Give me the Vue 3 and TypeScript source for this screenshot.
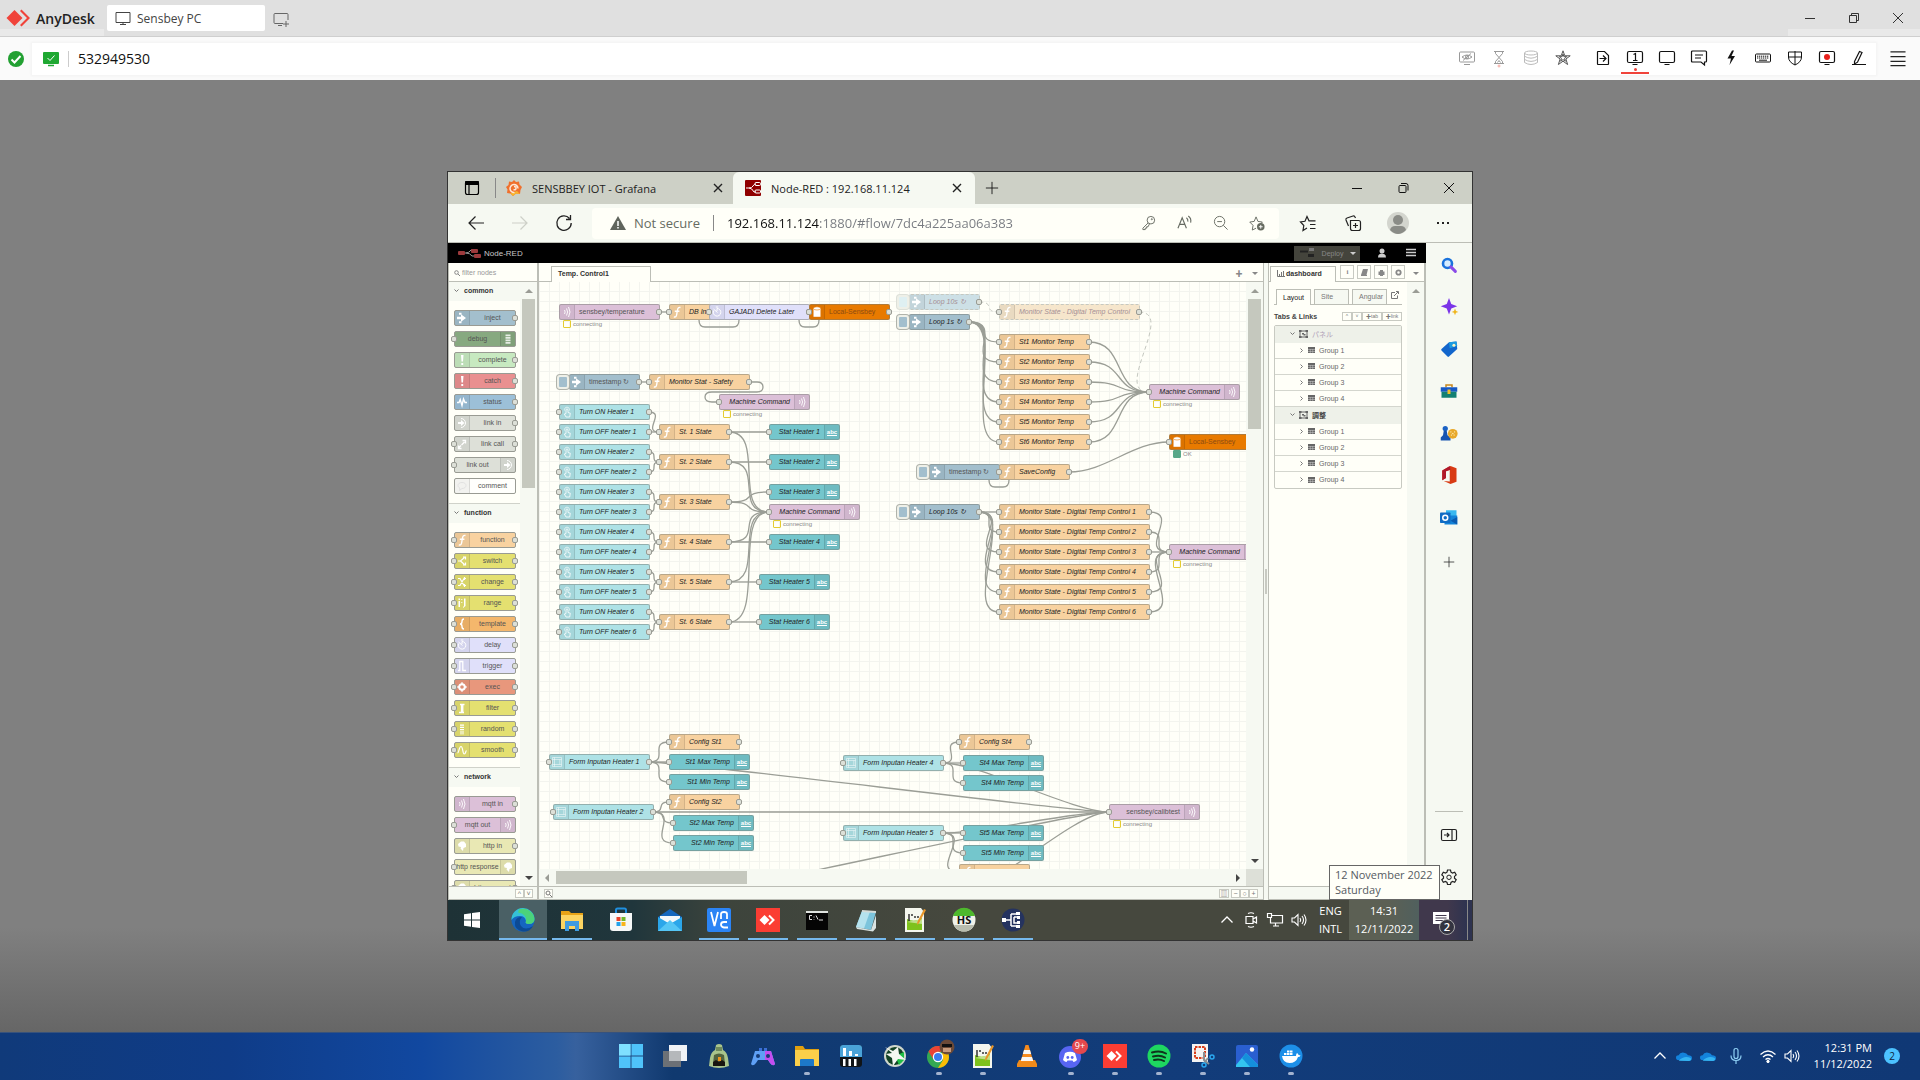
<script setup lang="ts">
type NodeKind = 'mqtt' | 'fn' | 'delay' | 'db' | 'inject' | 'button' | 'text' | 'form'

interface FlowNode {
  kind: NodeKind
  x: number
  y: number
  w: number
  label: string
  plain?: boolean
  right?: boolean
  off?: boolean
  status?: 'connecting' | 'OK'
  noIn?: boolean
  noOut?: boolean
}

interface PaletteNode {
  label: string
  color: string
  icon: string
  right?: boolean
  in?: boolean
  out?: boolean
}

const glyph: Record<string, string> = {
  inject: '<path d="M0 4.700h4V2.300L9 6 4 9.700V7.300H0zM2 .8h2.500v2H2zM2 9.200h2.500v2H2z"/>',
  fn: '<path d="M8.500 1.500C6 .8 5.700 3 5.300 5L4.600 9c-.3 1.700-1 2.300-2.800 1.800M2.800 5.300h4.600" fill="none" stroke="#fff" stroke-width="1.400"/>',
  alert: '<path d="M4 1h2.500l-.5 6.500H4.500zM4.300 9h1.900v2H4.300z"/>',
  status: '<path d="M0 6.500h2l1.200-3 1.800 6L6.500 3 8 6.500h2" fill="none" stroke="#fff" stroke-width="1.400"/>',
  link: '<path d="M1 5h3V3l3.500 3L4 9V7H1z"/><path d="M4 1.500a4.500 4.500 0 0 1 0 9" fill="none" stroke="#fff"/>',
  linkcall: '<path d="M2 9.500l2-2M4.500 7l3-3M5.500 2.500h3v3M1.500 7.500v3h3" fill="none" stroke="#fff" stroke-width="1.300"/>',
  bubble: '<path d="M5 2.500c2.500 0 4 1.300 4 3s-1.500 3-4 3l-2.500 2 .3-2.500C1.500 7.500 1 6.500 1 5.500c0-1.700 1.500-3 4-3z" fill="none" stroke="#ddd" stroke-width=".8"/>',
  debug: '<path d="M2.500 1.500h5v1.800h-5zM2.500 4h5v1.800h-5zM2.500 6.500h5v1.800h-5zM2.500 9h5v1.800h-5z" opacity=".8"/>',
  switch: '<path d="M1 6h2.500l4-3.500M3.500 6l4 3.500M6 2h2.500v2.500M8.500 7.500V10H6" fill="none" stroke="#fff" stroke-width="1.200"/>',
  change: '<path d="M1 2.500h2l4 7h2M1 9.500h2l4-7h2M7.500 1v3M7.500 8v3" fill="none" stroke="#fff" stroke-width="1.200"/>',
  range: '<path d="M1.500 4h1.500v6H1.500zM1.500 1.500H3v1.500H1.500zM7 1.500h1.500V9L6 11V9.500h1zM4.300 2h1v1h-1zM4.300 5h1v1h-1z"/>',
  brace: '<path d="M7 1C5 1 5 2 5 3.500S4.500 6 3 6c1.500 0 2 1 2 2.500S5 11 7 11" fill="none" stroke="#fff" stroke-width="1.400"/>',
  clock: '<path d="M5 2.500a3.800 3.800 0 1 1-3.300 2M5 2.500V5M1.500 3l4 3.500M3.800 1h2.500" fill="none" stroke="#fff" stroke-width="1"/>',
  trigger: '<path d="M1 10.500h1.800V1.500h3v9H9" fill="none" stroke="#fff" stroke-width="1.300"/>',
  gear: '<circle cx="5" cy="6" r="2.800" fill="none" stroke="#fff" stroke-width="2"/><path d="M4.300 1.200h1.400v2H4.300zM4.300 8.800h1.400v2H4.300zM.3 5.300h2v1.400h-2zM7.700 5.300h2v1.400h-2z"/>',
  filter: '<path d="M3 2.500h1.500v8H2M7.500 2.500H5.800v8H7" fill="none" stroke="#fff" stroke-width="1.300"/>',
  list: '<path d="M3 1.500h4v1.200H3zM3 3.800h4V5H3zM3 6.100h4v1.200H3zM3 8.400h4v1.200H3zM3 10.500h4v.8H3z"/>',
  smooth: '<path d="M.5 9C2 9 2 2.500 4 2.500S5.500 10 7.200 10 8.500 7 9.500 6.500" fill="none" stroke="#fff" stroke-width="1.200"/>',
  wave: '<path d="M2.500 4q1.300 2 0 4M4.500 2.500q2.200 3.500 0 7M6.500 1q3 5 0 10" fill="none" stroke="#fff" stroke-width=".9"/>',
  globe: '<path d="M1 4l3-2.500h3L9 4v3L6.500 8 6 11 3.500 8.500 4 7 1.500 6.500z"/>',
  db: '<path d="M1.500 2.500h7v8.300h-7z"/><ellipse cx="5" cy="2.400" rx="3.500" ry="1.600" stroke="#e87a00" stroke-width=".6"/>',
  button: '<path d="M4 7.500V4q0-1 1-1t1 1v2.500l2.300.7-.6 3.800H4L2.300 8z" fill="none" stroke="#fff" stroke-width=".8"/><path d="M2.500 4.500a2.600 2.600 0 1 1 5 0" fill="none" stroke="#fff" stroke-opacity=".8" stroke-width=".8"/>',
  form: '<path d="M.5 1.500h9v9h-9zM2.500 1.500v9M.5 3.500h9M.5 8.500h9M7.800 3.500v5" fill="none" stroke="#fff" stroke-opacity=".7" stroke-width=".7"/>',
}

const palette: { title: string; nodes: PaletteNode[] }[] = [
  {
    title: 'common',
    nodes: [
      { label: 'inject', color: '#a3bfcd', icon: 'inject', out: true },
      { label: 'debug', color: '#87a980', icon: 'debug', right: true, in: true },
      { label: 'complete', color: '#c7e9c0', icon: 'alert', out: true },
      { label: 'catch', color: '#e99090', icon: 'alert', out: true },
      { label: 'status', color: '#9cc0d8', icon: 'status', out: true },
      { label: 'link in', color: '#dde0d8', icon: 'link', out: true },
      { label: 'link call', color: '#dde0d8', icon: 'linkcall', in: true, out: true },
      { label: 'link out', color: '#dde0d8', icon: 'link', right: true, in: true },
      { label: 'comment', color: '#fffffc', icon: 'bubble' },
    ],
  },
  {
    title: 'function',
    nodes: [
      { label: 'function', color: '#f8d2a0', icon: 'fn', in: true, out: true },
      { label: 'switch', color: '#e4e070', icon: 'switch', in: true, out: true },
      { label: 'change', color: '#e4e070', icon: 'change', in: true, out: true },
      { label: 'range', color: '#e4e070', icon: 'range', in: true, out: true },
      { label: 'template', color: '#f4b76c', icon: 'brace', in: true, out: true },
      { label: 'delay', color: '#e0e0fa', icon: 'clock', in: true, out: true },
      { label: 'trigger', color: '#e0e0fa', icon: 'trigger', in: true, out: true },
      { label: 'exec', color: '#e8977c', icon: 'gear', in: true, out: true },
      { label: 'filter', color: '#e4e070', icon: 'filter', in: true, out: true },
      { label: 'random', color: '#e4e070', icon: 'list', in: true, out: true },
      { label: 'smooth', color: '#e4e070', icon: 'smooth', in: true, out: true },
    ],
  },
  {
    title: 'network',
    nodes: [
      { label: 'mqtt in', color: '#dcc0d8', icon: 'wave', out: true },
      { label: 'mqtt out', color: '#dcc0d8', icon: 'wave', right: true, in: true },
      { label: 'http in', color: '#e9e8b4', icon: 'globe', out: true },
      { label: 'http response', color: '#e9e8b4', icon: 'globe', right: true, in: true },
      { label: 'http request', color: '#e9e8b4', icon: 'globe', in: true, out: true },
    ],
  },
]

const kindIcon: Record<NodeKind, string> = {
  mqtt: 'wave', fn: 'fn', delay: 'clock', db: 'db', inject: 'inject', button: 'button', text: 'abc', form: 'form',
}

const nums = [1, 2, 3, 4, 5, 6]
const stateY = [150, 180, 220, 260, 300, 340]
const heaterY = [150, 180, 210, 260, 300, 340]

const nodes: FlowNode[] = [
  { kind: 'mqtt', x: 20, y: 30, w: 100, label: 'sensbey/temperature', plain: true, status: 'connecting', noIn: true },
  { kind: 'fn', x: 130, y: 30, w: 60, label: 'DB Insert' },
  { kind: 'delay', x: 170, y: 30, w: 100, label: 'GAJADI Delete Later' },
  { kind: 'db', x: 270, y: 30, w: 80, label: 'Local-Sensbey', plain: true },
  { kind: 'inject', x: 30, y: 100, w: 70, label: 'timestamp ↻', plain: true },
  { kind: 'fn', x: 110, y: 100, w: 100, label: 'Monitor Stat - Safety' },
  { kind: 'mqtt', x: 180, y: 120, w: 90, label: 'Machine Command', right: true, status: 'connecting', noOut: true },
  ...nums.flatMap((n): FlowNode[] => [
    { kind: 'button', x: 20, y: 90 + n * 40, w: 90, label: `Turn ON Heater ${n}` },
    { kind: 'button', x: 20, y: 110 + n * 40, w: 90, label: `Turn OFF heater ${n}` },
  ]),
  ...nums.map((n): FlowNode => ({ kind: 'fn', x: 120, y: stateY[n - 1], w: 70, label: `St. ${n} State` })),
  ...nums.map((n): FlowNode => ({
    kind: 'text', x: n < 5 ? 230 : 220, y: heaterY[n - 1], w: 70, label: `Stat Heater ${n}`, right: true, noOut: true,
  })),
  { kind: 'mqtt', x: 230, y: 230, w: 90, label: 'Machine Command', right: true, status: 'connecting', noOut: true },
  { kind: 'inject', x: 370, y: 20, w: 70, label: 'Loop 10s ↻', off: true },
  { kind: 'inject', x: 370, y: 40, w: 60, label: 'Loop 1s ↻' },
  { kind: 'fn', x: 460, y: 30, w: 140, label: 'Monitor State - Digital Temp Control', off: true },
  ...nums.map((n): FlowNode => ({ kind: 'fn', x: 460, y: 40 + n * 20, w: 90, label: `St${n} Monitor Temp` })),
  { kind: 'mqtt', x: 610, y: 110, w: 90, label: 'Machine Command', right: true, status: 'connecting', noOut: true },
  { kind: 'db', x: 630, y: 160, w: 80, label: 'Local-Sensbey', plain: true, status: 'OK' },
  { kind: 'inject', x: 390, y: 190, w: 70, label: 'timestamp ↻', plain: true },
  { kind: 'fn', x: 460, y: 190, w: 70, label: 'SaveConfig' },
  { kind: 'inject', x: 370, y: 230, w: 70, label: 'Loop 10s ↻' },
  ...nums.map((n): FlowNode => ({
    kind: 'fn', x: 460, y: 210 + n * 20, w: 150, label: `Monitor State - Digital Temp Control ${n}`,
  })),
  { kind: 'mqtt', x: 630, y: 270, w: 90, label: 'Machine Command', right: true, status: 'connecting', noOut: true },
  { kind: 'form', x: 10, y: 480, w: 100, label: 'Form Inputan Heater 1' },
  { kind: 'fn', x: 130, y: 460, w: 70, label: 'Config St1' },
  { kind: 'text', x: 130, y: 480, w: 80, label: 'St1 Max Temp', right: true, noOut: true },
  { kind: 'text', x: 130, y: 500, w: 80, label: 'St1 Min Temp', right: true, noOut: true },
  { kind: 'form', x: 14, y: 530, w: 100, label: 'Form Inputan Heater 2' },
  { kind: 'fn', x: 130, y: 520, w: 70, label: 'Config St2' },
  { kind: 'text', x: 134, y: 541, w: 80, label: 'St2 Max Temp', right: true, noOut: true },
  { kind: 'text', x: 134, y: 561, w: 80, label: 'St2 Min Temp', right: true, noOut: true },
  { kind: 'form', x: 304, y: 481, w: 100, label: 'Form Inputan Heater 4' },
  { kind: 'fn', x: 420, y: 460, w: 70, label: 'Config St4' },
  { kind: 'text', x: 424, y: 481, w: 80, label: 'St4 Max Temp', right: true, noOut: true },
  { kind: 'text', x: 424, y: 501, w: 80, label: 'St4 Min Temp', right: true, noOut: true },
  { kind: 'form', x: 304, y: 551, w: 100, label: 'Form Inputan Heater 5' },
  { kind: 'text', x: 424, y: 551, w: 80, label: 'St5 Max Temp', right: true, noOut: true },
  { kind: 'text', x: 424, y: 571, w: 80, label: 'St5 Min Temp', right: true, noOut: true },
  { kind: 'fn', x: 420, y: 590, w: 70, label: '' },
  { kind: 'mqtt', x: 570, y: 530, w: 90, label: 'sensbey/calibtest', plain: true, right: true, status: 'connecting', noOut: true },
]

// Cubic wire between two ports; short wires get a flatter curve.
function wire(x1: number, y1: number, x2: number, y2: number): string {
  const dist = Math.hypot(x2 - x1, y2 - y1)
  const reach = Math.round(Math.min(1, dist / 50) * 37)
  return `M${x1} ${y1}C${x1 + reach} ${y1} ${x2 - reach} ${y2} ${x2} ${y2}`
}

const wires: string[] = [
  wire(120, 30, 130, 30),
  'M160 38q0 7 6 7h28q6 0 6-7',
  'M260 38q0 7 6 7h8q6 0 6-7',
  wire(100, 100, 110, 100),
  'M210 100h8q6 0 6 5t-6 5h-45q-7 0-7 5t7 5h7',
  'M450 198q0 7 6 7h8q6 0 6-7',
  ...nums.flatMap((n) => [
    wire(110, 90 + n * 40, 120, stateY[n - 1]),
    wire(110, 110 + n * 40, 120, stateY[n - 1]),
    wire(190, stateY[n - 1], n < 5 ? 230 : 220, heaterY[n - 1]),
    wire(190, stateY[n - 1], 230, 230),
    wire(430, 40, 460, 40 + n * 20),
    wire(550, 40 + n * 20, 610, 110),
    wire(440, 230, 460, 210 + n * 20),
    wire(610, 210 + n * 20, 630, 270),
  ]),
  wire(530, 190, 630, 160),
  wire(110, 480, 130, 460), wire(110, 480, 130, 480), wire(110, 480, 130, 500), wire(110, 480, 570, 530),
  wire(114, 530, 130, 520), wire(114, 530, 134, 541), wire(114, 530, 134, 561), wire(114, 530, 570, 530),
  wire(404, 481, 420, 460), wire(404, 481, 424, 481), wire(404, 481, 424, 501), wire(404, 481, 570, 530),
  wire(404, 551, 424, 551), wire(404, 551, 424, 571), wire(404, 551, 420, 590), wire(404, 551, 570, 530),
  wire(114, 619, 570, 530), wire(404, 621, 570, 530),
]
const offWires: string[] = [wire(440, 20, 460, 30), wire(600, 30, 610, 110)]

const line: Record<string, string> = {
  monitor: '<path d="M1 2.500h14v10H1zM8 12.500v2M5 14.500h6"/>',
  newMonitor: '<path d="M10 12.500H2q-1 0-1-1v-8q0-1 1-1h12q1 0 1 1V9M5 14.500h4M13 10v6M10 13h6"/>',
  min: '<path d="M3 8.500h10"/>',
  restore: '<path d="M3.500 5.500h7v7h-7zM5.500 5.500v-2h7v7h-2"/>',
  restoreRound: '<path d="M5 5.500h5q1 0 1 1v5q0 1-1 1H5q-1 0-1-1v-5q0-1 1-1zM6 3.500h5q2 0 2 2v5"/>',
  close: '<path d="M3 3l10 10M13 3L3 13"/>',
  closeSmall: '<path d="M4 4l8 8M12 4l-8 8" stroke-width="1.400"/>',
  plus: '<path d="M8 1v14M1 8h14"/>',
  eyeoff: '<path d="M1.500 2h13q1 0 1 1v8q0 1-1 1h-13q-1 0-1-1V3q0-1 1-1zM5 14.500h6M3 7q5-4 10 0-5 4-10 0zM4 10.500L12 3.500"/><circle cx="8" cy="7" r="1.500"/>',
  hourglass: '<path d="M3 1.500h10M3 13.500h10M4.500 1.500v2L8 7.500l3.500-4v-2M4.500 13.500v-2L8 7.500l3.500 4v2M6.500 12.500l1.500-2 1.500 2"/><circle cx="8" cy="16" r="1" stroke="#f5a8a0"/>',
  dbs: '<g stroke="#bbb"><ellipse cx="8" cy="3" rx="6.500" ry="2"/><path d="M1.500 3v9.500q6.500 4 13 0V3M1.500 6.200q6.500 4 13 0M1.500 9.400q6.500 4 13 0"/></g>',
  star: '<path d="M8 .8l1.800 5h5.400L10.900 9l1.700 5.500L8 11.200l-4.600 3.300L5.100 9 .8 5.800h5.400zM8 4l.9 2.700h2.800L9.500 8.500l.8 2.700L8 9.600l-2.300 1.600.8-2.700-2.200-1.800h2.800z" stroke="#555"/>',
  file: '<path d="M3 1.500h6.500l4 4v8.500q0 .5-.5.5H3q-.5 0-.5-.5V2q0-.5.500-.5zM4.500 8.500h6M8 5.500l3 3-3 3" stroke-width="1.200"/>',
  display1: '<path d="M2 1.500h12q1.500 0 1.500 1.500v8q0 1.500-1.500 1.500H2Q.5 12.500.500 11V3Q.5 1.500 2 1.500zM5.500 14.500h5M6.500 4.500l2-1v7M6 10.500h4.500" stroke-width="1.200"/>',
  display: '<path d="M2 1.500h12q1.500 0 1.500 1.500v8q0 1.500-1.500 1.500H2Q.5 12.500.500 11V3Q.5 1.500 2 1.500zM5.500 14.500h5" stroke-width="1.200"/>',
  chat: '<path d="M1.500 1h13q1 0 1 1v9q0 1-1 1h-1v3l-3.500-3h-8.500q-1 0-1-1V2q0-1 1-1zM4 5h8M4 8h6" stroke-width="1.200"/>',
  bolt: '<path d="M9 .5L4.500 8.500H8L6.500 15 12 6H8.500L11 .5z" fill="#111" stroke="none"/>',
  keyboard: '<path d="M1.500 4h13q1 0 1 1v6q0 1-1 1h-13q-1 0-1-1V5q0-1 1-1z"/><path d="M2 6.200h12M2 8h12" stroke-dasharray="1.300 .7"/><path d="M4 10.200h8"/>',
  shield: '<path d="M1.500 2H8h6.500v5q0 5-6.500 8Q1.500 12 1.500 7zM8 1v14M1.500 7h13"/>',
  record: '<path d="M2 1.500h12q1.500 0 1.500 1.500v8q0 1.500-1.500 1.500H2Q.5 12.500.500 11V3Q.5 1.500 2 1.500zM5.500 14.500h5" stroke-width="1.200"/><circle cx="8" cy="7" r="3" fill="#e8201c" stroke="none"/>',
  pen: '<path d="M3.500 11.500l5-10 2.500 1-4.500 9.700-3 1.800zM1 14.500h14" stroke-width="1.200"/>',
  menu: '<path d="M0 1h16M0 6h16M0 11h16M0 15.500h16" stroke-width="1.300"/>',
  tabs: '<path d="M3.500 1.500h9q2 0 2 2v9q0 2-2 2h-9q-2 0-2-2v-9q0-2 2-2zM5 4v10.500" stroke-width="1.200"/><path d="M1.500 1.500h13v3h-13z" fill="currentColor"/>',
  back: '<path d="M16 8H1M7.500 1.500L1 8l6.500 6.500" stroke-width="1.200"/>',
  fwd: '<path d="M0 8h15M8.500 1.500L15 8l-6.500 6.500" stroke-width="1.200"/>',
  reload: '<path d="M13.500 3.500A7.200 7.200 0 1 0 15.200 8M14.500 0v4.500H10" stroke-width="1.300"/>',
  key: '<circle cx="10.500" cy="5.500" r="4"/><path d="M7.500 8.500L2 14v1.500h2.500V14H6v-1.500h1.500L9 9.500"/><circle cx="11.500" cy="4.500" r=".6"/>',
  read: '<path d="M1 14L5.500 3 10 14M2.800 10h5.500M10 3q2 1.500 1.500 4M12 1q3.500 2.500 2.500 7" stroke-width="1.200"/>',
  zoomout: '<circle cx="7" cy="7" r="5.500"/><path d="M11 11l4.500 4.500M4.500 7h5"/>',
  favadd: '<path d="M7.500 14l-4 2 .8-5L.8 7.500l4.700-.7L7.500 2l2 4.800 4.700.7-2 2"/><circle cx="12.500" cy="12.500" r="4" fill="#666b60" stroke="none"/><path d="M12.500 10.500v4M10.500 12.500h4" stroke="#fff"/>',
  favs: '<path d="M7 13l-4 2.500.8-5L.5 7l4.500-.7L7 1.500l2 4.300h6.500M10 9.500h5.500M10 13.500h5.500" stroke-width="1.200"/>',
  collect: '<path d="M5.500 5.500h8q2 0 2 2v6q0 2-2 2h-6q-2 0-2-2zM10.500 8v5M8 10.500h5M3.500 11L1 5q-.5-1.500 1-2l6-2q1.500-.5 2 1l.5 1" stroke-width="1.200"/>',
  dots: '<path d="M2 7h2v2H2zM7 7h2v2H7zM12 7h2v2h-2z" fill="currentColor" stroke="none"/>',
  panel: '<path d="M2 2.500h12q1.500 0 1.500 1.500v8q0 1.500-1.500 1.500H2Q.5 13.500.500 12V4Q.5 2.500 2 2.500zM11 2.500v11M3 8h5M6 6l2 2-2 2" stroke-width="1.200"/>',
  cog: '<path d="M6.500 1h3l.5 2.200 1.500.9 2.200-.8 1.500 2.600-1.700 1.500v1.800l1.700 1.500-1.500 2.600-2.200-.8-1.500.9L9.500 15.500h-3L6 13.400l-1.500-.9-2.200.8L.8 10.700l1.700-1.500V7.400L.8 5.900l1.500-2.600 2.200.8L6 3.200z" stroke-width="1.200"/><circle cx="8" cy="8.300" r="2.200"/>',
  chevUp: '<path d="M2.500 10.500L8 5l5.500 5.500" stroke-width="1.300"/>',
  cam: '<path d="M3 4.500h7v7H3zM10 7l3.500-2v6L10 9M5 1.500q3-1.500 6 0M5 14.500q3 1.500 6 0" stroke-width="1.200"/>',
  net: '<path d="M4.500 3.500h11v7.500H3.500V6M8.500 11v3M6 14h6M.5 1.500h4v4h-4z" stroke-width="1.200"/>',
  vol: '<path d="M1 6h2.500L7 2.500v11L3.500 10H1zM9 6q1.500 2 0 4M11 4q3 4 0 8M13 2.500q4 5.500 0 11" stroke-width="1.100"/>',
  mic: '<path d="M6 2.500q0-2 2-2t2 2v6q0 2-2 2t-2-2zM3 7.500q0 5 5 5t5-5M8 12.500V16" stroke-width="1.200" stroke="#8fd0f5"/>',
  wifi: '<path d="M.5 6.500q7.500-7 15 0M3 9q5-4.500 10 0M5.500 11.500q2.500-2 5 0" stroke-width="1.300"/><circle cx="8" cy="13.500" r="1.200" fill="#fff"/>',
}

const app: Record<string, string> = {
  win11: '<path d="M0 0h11.500v11.500H0zM12.500 0H24v11.500H12.500zM0 12.500h11.500V24H0zM12.500 12.500H24V24H12.500z" fill="#4fc3fa"/><path d="M0 0h11.500v11.500H0z" fill="#7fe0ff"/>',
  task: '<path d="M6 1h18v16H6z" fill="#f0f2f5"/><path d="M0 7h18v16H0z" fill="#777" fill-opacity=".9"/><path d="M6 7h12v10H6z" fill="#b5b8bb"/>',
  buddha: '<path d="M9 1q3-2 6 0l1 5q4 2 5 8l1 8q-10 4-20 0l1-8q1-6 5-8z" fill="#a9c48b"/><path d="M7 11q5-3 10 0l1 9H6z" fill="#51633f"/><path d="M6 18l3-2 3 2 3-2 3 2v4H6z" fill="#181510"/><path d="M9 3h6v4H9z" fill="#6f8b5c"/><path d="M11 13h3v4h-3z" fill="#f0961d"/>',
  pad: '<path d="M4 7h16l4 13q-2 3-5-1l-2-3H7l-2 3q-3 4-5 1z" fill="#5fa0f5"/><path d="M14 7h6l4 13q-2 3-5-1l-2-3h-3z" fill="#c44df0"/><path d="M8 4h3v3H8zM13 4h3v3h-3z" fill="#3b70d8"/><circle cx="7" cy="12" r="2" fill="#173b75"/><circle cx="17" cy="12" r="2" fill="#173b75"/>',
  folder: '<path d="M0 2h8l2 3h14v4H0z" fill="#e0a010"/><path d="M0 6h24v16H0z" fill="#fbcf4a"/><path d="M5 16q0-1 1-1h12q1 0 1 1v6H5z" fill="#1d78c8"/>',
  folder10: '<path d="M1 3h8l2 2h12v4H1z" fill="#e8a317"/><path d="M1 7h22v14H1z" fill="#fcd462"/><path d="M5 13h14v10h-4v-5H9v5H5z" fill="#3f9be0"/>',
  meter: '<rect x="1" y="1" width="22" height="22" rx="3" fill="#101417"/><path d="M1 4q0-3 3-3h16q3 0 3 3v9H1z" fill="#4aa3d8"/><path d="M4 4h3v8H4zM10 7h3v5h-3zM16 10h3v2h-3z" fill="#fff"/><path d="M4 15h2.500v7H4zM9.500 15H12v7H9.500zM15 15h2.500v7H15z" fill="#fff"/>',
  aim: '<circle cx="12" cy="12" r="11" fill="#cfd6cc"/><circle cx="12" cy="12" r="9" fill="#134225"/><path d="M12 12l9-4v8l-5 5z" fill="#1fbf45"/><path d="M2 3l8 4 5-4 1 7 7 6-8-1-5 7-1-8-6-4 6-1z" fill="#f5f7f2"/>',
  chrome: '<circle cx="11" cy="13" r="11" fill="#34a853"/><path d="M11 2a11 11 0 0 1 9.500 5.500H11z" fill="#ea4335"/><path d="M1.500 7.500A11 11 0 0 1 20.500 7.500H11l-4.500 8z" fill="#ea4335"/><path d="M20.500 7.500A11 11 0 0 1 11 24l5-8-1-8.500z" fill="#fbbc05"/><circle cx="11" cy="13" r="5.200" fill="#fff"/><circle cx="11" cy="13" r="4" fill="#3a7df0"/><circle cx="20" cy="3" r="7.500" fill="#6b4a38"/><path d="M15 0h10v3H15z" fill="#111"/><path d="M16 4h8v4h-8z" fill="#c79a7b"/>',
  npp: '<path d="M2 0h16l3 4v20H2z" fill="#f4f6ee"/><path d="M4 11q8 4 15-1v12H4z" fill="#7ec21c"/><path d="M4 14l15-3v5z" fill="#bfe08a"/><path d="M6 6v7M8 7h2M11 9h2M14 9h2" stroke="#333" stroke-width="1.500"/><path d="M23 2l-7 13-2 2 .3-3L21 1z" fill="#e8962a"/>',
  vlc: '<path d="M2 20l2-4h16l2 4v3H2z" fill="#f08a1a"/><path d="M10.500 1h3l5 17h-13z" fill="#f68b1e"/><path d="M9 6h6l1.200 4H7.800zM7 13h10l1.200 4H5.800z" fill="#f6f6f6"/>',
  discord: '<circle cx="11" cy="13" r="11" fill="#5865f2"/><path d="M6 9q5-2.500 10 0l2 7q-2 2-3.500 2l-1-1.500h-5l-1 1.500Q6 18 4 16z" fill="#fff"/><circle cx="8.800" cy="13.500" r="1.400" fill="#5865f2"/><circle cx="13.200" cy="13.500" r="1.400" fill="#5865f2"/>',
  anydesk: '<path d="M0 0h24v24H0z" fill="#fb3d33"/><path d="M8.500 7l5 5-5 5-5-5z" fill="#fff"/><path d="M13 7.500l4.500 4.500-4.500 4.500" fill="none" stroke="#fff" stroke-width="2"/>',
  spotify: '<circle cx="12" cy="12" r="11.500" fill="#1ed760"/><path d="M5 8.500q8-2.500 14 1M6 12.500q7-2 12 1M7 16q5.500-1.500 10 1" fill="none" stroke="#10331c" stroke-width="2" stroke-linecap="round"/>',
  snip: '<path d="M1 0h16v18H1z" fill="#f3f3f3"/><path d="M4 3h10v11H4z" fill="none" stroke="#d8401e" stroke-width="2" stroke-dasharray="2.500 1"/><path d="M13 8v8l5 4M17 14l-4 5" stroke="#8a8f94" stroke-width="2" fill="none"/><circle cx="13" cy="21" r="2" fill="none" stroke="#2aa7ee" stroke-width="1.500"/><circle cx="21" cy="13" r="2" fill="none" stroke="#2aa7ee" stroke-width="1.500"/>',
  photos: '<rect x="1" y="1" width="22" height="22" rx="2" fill="#2a5fd0"/><path d="M1 21L11 9l12 12v2H1z" fill="#33c5ef"/><path d="M11 9l12 12v2h-8L7 14z" fill="#1590dc"/><circle cx="17" cy="5.500" r="2.200" fill="#fff"/>',
  docker: '<circle cx="12" cy="12" r="11.500" fill="#1d8fe8"/><path d="M3 12h14q0-2 1-3 1.500 1 1.500 2 1.500 0 2 .5-.5 1.500-2.500 1.500-2 6-8.500 6T3 12zM5 9h2.500v2H5zM8 9h2.500v2H8zM11 9h2.500v2H11zM8 6.500h2.500v2H8zM11 6.500h2.500v2H11z" fill="#fff"/>',
  win10: '<path d="M4 6.200l7-1v6.300H4zM12 5l8-1v7.500h-8zM4 12.500h7v6.300l-7-1zM12 12.500h8V20l-8-1z" fill="#fff"/>',
  edge: '<circle cx="12" cy="12" r="11.500" fill="#1565c0"/><path d="M.5 12A11.500 11.500 0 0 1 23.500 11q0 5-6 5-4-.5-2.500-3Q14 8 9 8 3 8 .5 12z" fill="#35c1d6"/><path d="M8 1.500A11.500 11.500 0 0 1 23.500 11q0 5-6 5-4-.5-2.500-3 1-7-8-8.500z" fill="#53d85c" fill-opacity=".75"/><path d="M11 9q-4 4-1 9 4 5 12 0-3 6-10 5.500Q3 22 4 14q1-5 7-5z" fill="#0d4a94"/>',
  store: '<path d="M7 5V2q0-1.500 1.500-1.500h7Q17 .5 17 2v3" fill="none" stroke="#1f8fe0" stroke-width="2"/><path d="M1 5h22v15q0 3-3 3H4q-3 0-3-3z" fill="#f6f8f8"/><path d="M7.500 9h4v4h-4z" fill="#e8432a"/><path d="M12.500 9h4v4h-4z" fill="#73b82a"/><path d="M7.500 14h4v4h-4z" fill="#23a2ea"/><path d="M12.500 14h4v4h-4z" fill="#f9b51c"/>',
  mail: '<path d="M0 9L12 1l12 8v14H0z" fill="#1567bd"/><path d="M2 8h20v8H2z" fill="#f4f8fa"/><path d="M0 9l12 7L24 9v14H0z" fill="#2ba6ea"/><path d="M0 23L12 12l12 11z" fill="#55c6f5"/>',
  vnc: '<rect width="24" height="24" rx="2" fill="#2b84f5"/><path d="M4 4l3.500 14L11 4M14 11V6q0-2 3-2t3 2v5M20 14h-3q-3 0-3 2.500t3 3h4" fill="none" stroke="#fff" stroke-width="1.800"/>',
  cmd: '<path d="M1 3h22v19H1z" fill="#050505"/><path d="M1 3h22v2H1z" fill="#dfe3e0"/><path d="M7 7.500H4.500v4H7M9 8.500v1M9 11v.5M11 7.500l2 4M14 12h4" fill="none" stroke="#ddd"/>',
  notepad: '<path d="M8 3l14 1-5 18-15-3z" fill="#7cc4dc"/><path d="M8 3l8 .6L10 20.500 2 19z" fill="#b5e2ee"/><path d="M8 2l14 1v2L8 4z" fill="#d5dbd8"/><path d="M2 19l15 3 5-15v13l-3 3.500L3 21z" fill="#d9e3e2"/>',
  hs: '<circle cx="12" cy="12" r="11.500" fill="#f0f2ea"/><path d="M1 8a11.500 11.500 0 0 1 22 0z" fill="#4db82c"/><path d="M2 17a11 11 0 0 0 20 0z" fill="#b8bcae"/>',
  tree: '<circle cx="12" cy="12" r="11.500" fill="#25335f"/><path d="M5 12h5M10 6v12M10 6h6M10 18h6M13 9v6h5M13 9h4" fill="none" stroke="#fff" stroke-width="1.500"/><path d="M1 10h4v4H1zM15 4h4v3h-4zM16 8h3v3h-3zM16 13h3v3h-3zM15 17h4v3h-4z" fill="#fff"/>',
  search: '<circle cx="10" cy="10" r="6" fill="#d5ecff" stroke="#1b73dc" stroke-width="3.500"/><path d="M14.500 14.500l6 6" stroke="#8a4be8" stroke-width="4" stroke-linecap="round"/>',
  spark: '<path d="M12 0l3 8 8 3-8 3-3 8-3-8-8-3 8-3z" fill="#7b35e8"/><path d="M20 14l1.300 3.200 3.200 1.300-3.200 1.300L20 23l-1.300-3.200-3.200-1.300 3.200-1.300z" fill="#f0b51c"/>',
  tag: '<path d="M12 3l10-1 1 10-11 10q-1 1-2 0L2 14q-1-1 0-2z" fill="#1266cc"/><path d="M12 3l10-1 1 6-10 3z" fill="#1b9be0"/><circle cx="18.500" cy="7" r="2" fill="#fff3c0"/>',
  tools: '<path d="M8 7V4h8v3" fill="none" stroke="#c8861c" stroke-width="2"/><path d="M1 7h22v6H1z" fill="#1658c4"/><path d="M2 13h20v8H2z" fill="#128073"/><path d="M10 10h4v6h-4z" fill="#f0bf2a"/>',
  games: '<circle cx="7" cy="6" r="3.500" fill="#1b62c4"/><path d="M5 9h4l1 6 4 3v4H1v-4l3-3z" fill="#1754b0"/><circle cx="17" cy="13" r="6.500" fill="#e8a82a"/><path d="M14 10l6 6M20 10l-6 6" stroke="#fbe3a0" stroke-width="1.500" stroke-dasharray="1.500 1.500"/>',
  office: '<path d="M14 0l8 3v18l-8 3-9-4 8 .5V5L8 7v9l-5 3V6z" fill="#d83b14"/><path d="M13 0L3 6v13l5-3V7l6-2z" fill="#b0182a"/>',
  outlook: '<path d="M8 3h14v12H8z" fill="#38b8f0"/><path d="M6 10h17v12H6z" fill="#1283d8"/><path d="M23 12v10l-9-5z" fill="#0a5ab0"/><rect y="6" width="14" height="14" rx="1" fill="#0f6cc4"/><circle cx="7" cy="13" r="3.300" fill="none" stroke="#fff" stroke-width="2"/>',
  cloud: '<path d="M4 18q-4 0-4-3.500T4 11q2-5 8-4 4 0 6 4 6 0 6 4t-4 4z" fill="#1383dc"/><path d="M4 19q8-8 18-4 2 4-3 4.500z" fill="#35b4f2"/>',
}

const remoteApps = [
  { id: 'folder10', name: 'File Explorer', open: true },
  { id: 'store', name: 'Store', open: false },
  { id: 'mail', name: 'Mail', open: false },
  { id: 'vnc', name: 'VNC', open: true },
  { id: 'anydesk', name: 'AnyDesk', open: true },
  { id: 'cmd', name: 'Command Prompt', open: true },
  { id: 'notepad', name: 'Notepad', open: true },
  { id: 'npp', name: 'Notepad++', open: true },
  { id: 'hs', name: 'HS', open: true, text: 'HS' },
  { id: 'tree', name: 'Topology', open: true },
]

const hostApps = [
  { id: 'win11', open: false }, { id: 'task', open: false }, { id: 'buddha', open: false }, { id: 'pad', open: false },
  { id: 'folder', open: true }, { id: 'meter', open: false }, { id: 'aim', open: false }, { id: 'chrome', open: true },
  { id: 'npp', open: true }, { id: 'vlc', open: false }, { id: 'discord', open: true, badge: '9+' },
  { id: 'anydesk', open: true }, { id: 'spotify', open: true }, { id: 'snip', open: true },
  { id: 'photos', open: true }, { id: 'docker', open: true },
]

const dimTools = ['eyeoff', 'hourglass', 'dbs', 'star']
const tools = ['file', 'display1', 'display', 'chat', 'bolt', 'keyboard', 'shield', 'record', 'pen']
const edgeApps = ['search', 'spark', 'tag', 'tools', 'games', 'office', 'outlook']
const uiTabs = [{ name: 'パネル', soft: true }, { name: '調整', soft: false }]
</script>

<template>
  <div class="host">
    <header class="titlebar">
      <div class="brand">
        <svg width="24" height="18" viewBox="0 0 24 18"><path d="M8.500 1l8 8-8 8-8-8z" fill="#f0433a" /><path d="M14 2l1.500-1.500L24 9l-8.500 8.500L14 16l7-7z" fill="#f0433a" /></svg>
        <span>AnyDesk</span>
      </div>
      <button class="session"><svg class="ln" viewBox="0 0 16 16" v-html="line.monitor" />Sensbey PC</button>
      <button class="icon newtab" aria-label="New session"><svg class="ln" viewBox="0 0 16 16" v-html="line.newMonitor" /></button>
      <div class="winctl">
        <button v-for="b in ['min', 'restore', 'close']" :key="b" class="icon" :aria-label="b"><svg class="ln" viewBox="0 0 16 16" v-html="line[b]" /></button>
      </div>
    </header>
    <div class="addressbar">
      <svg class="okdot" width="16" height="16" viewBox="0 0 16 16"><circle cx="8" cy="8" r="8" fill="#22a032" /><path d="M3.500 8.500l3 3 6-6.500" fill="none" stroke="#fff" stroke-width="2" /></svg>
      <div class="addressbox">
        <svg width="16" height="16" viewBox="0 0 16 16"><rect y="1" width="16" height="12" rx="1" fill="#1fa832" /><path d="M4.500 7l2.500 2.500L11.500 4.500" fill="none" stroke="#fff" /><path d="M5 14.500h6" stroke="#1fa832" stroke-width="1.500" /></svg>
        <i class="rule" />
        <input class="address" aria-label="Remote address" value="532949530">
        <button v-for="t in dimTools" :key="t" class="icon tool dim" :aria-label="t"><svg class="ln" viewBox="0 0 16 17" v-html="line[t]" /></button>
        <i class="toolgap" />
        <button v-for="t in tools" :key="t" class="icon tool" :class="{ active: t === 'display1' }" :aria-label="t"><svg class="ln" viewBox="0 0 16 17" v-html="line[t]" /></button>
      </div>
      <button class="icon burger" aria-label="Menu"><svg class="ln" viewBox="0 0 16 17" v-html="line.menu" /></button>
    </div>

    <main class="stage">
      <section class="remote">
        <div class="tabstrip">
          <button class="icon tabmenu" aria-label="Tab actions"><svg class="ln" viewBox="0 0 16 16" v-html="line.tabs" /></button>
          <div class="tab">
            <svg width="16" height="16" viewBox="0 0 16 16"><path d="M8 0l2 2 3-.5.500 3L16 7l-1.500 3-.5 4-4-.5L7 16l-2.500-2.500L1 13l.5-3.500L0 7l2.500-2L3 1.500 6 2z" fill="#f0702c" /><path d="M3 14l8-3 3 3-4-.5L7 16l-2.500-2.500z" fill="#f8b52c" /><path d="M12 8.500a4 4 0 1 0-3.500 4M8 6.500q2.500 0 2 2T7.500 9.500" fill="none" stroke="#fde8d8" stroke-width="1.500" /></svg>
            <span>SENSBBEY IOT - Grafana</span>
            <button class="icon" aria-label="Close tab"><svg class="ln" viewBox="0 0 16 16" v-html="line.closeSmall" /></button>
          </div>
          <div class="tab current">
            <svg width="16" height="16" viewBox="0 0 16 16"><rect width="16" height="16" rx="1" fill="#8f0000" /><path d="M1 8h3q3 0 4-2t3-2M4 8q3 0 5 4h2" fill="none" stroke="#fff" /><rect x="10" y="2.500" width="5.500" height="3" rx="1" fill="none" stroke="#fff" /><rect x="10" y="10" width="5.500" height="3" rx="1" fill="none" stroke="#fff" /></svg>
            <span>Node-RED : 192.168.11.124</span>
            <button class="icon" aria-label="Close tab"><svg class="ln" viewBox="0 0 16 16" v-html="line.closeSmall" /></button>
          </div>
          <button class="icon addtab" aria-label="New tab"><svg class="ln" viewBox="0 0 16 16" v-html="line.plus" /></button>
          <div class="edgectl">
            <button v-for="b in ['min', 'restoreRound', 'close']" :key="b" class="icon" :aria-label="b"><svg class="ln" viewBox="0 0 16 16" v-html="line[b]" /></button>
          </div>
        </div>
        <div class="navbar">
          <button class="icon nav" aria-label="Back"><svg class="ln" viewBox="0 0 16 16" v-html="line.back" /></button>
          <button class="icon nav faded" aria-label="Forward"><svg class="ln" viewBox="0 0 16 16" v-html="line.fwd" /></button>
          <button class="icon nav" aria-label="Reload"><svg class="ln" viewBox="0 0 16 16" v-html="line.reload" /></button>
          <div class="omnibox">
            <svg width="16" height="16" viewBox="0 0 16 16"><path d="M8 1l8 14H0z" fill="#5f645c" /><path d="M8 6v5M8 12v1.500" stroke="#fff" stroke-width="1.500" /></svg>
            <span class="insecure">Not secure</span>
            <i class="rule dark" />
            <input class="url" aria-label="Address" value="192.168.11.124:1880/#flow/7dc4a225aa06a383">
            <button v-for="b in ['key', 'read', 'zoomout', 'favadd']" :key="b" class="icon omni" :aria-label="b"><svg class="ln" viewBox="0 0 17 17" v-html="line[b]" /></button>
          </div>
          <button class="icon ext" aria-label="Favorites"><svg class="ln" viewBox="0 0 16 16" v-html="line.favs" /></button>
          <button class="icon ext" aria-label="Collections"><svg class="ln" viewBox="0 0 16 16" v-html="line.collect" /></button>
          <button class="icon ext" aria-label="Profile"><svg width="22" height="22" viewBox="0 0 22 22"><circle cx="11" cy="11" r="11" fill="#d3d5ce" /><circle cx="11" cy="8" r="5" fill="#8a8c87" /><path d="M3 18q1-4 5-4h6q4 0 5 4-8 8-16 0z" fill="#8a8c87" /></svg></button>
          <button class="icon ext" aria-label="More"><svg class="ln" viewBox="0 0 16 16" v-html="line.dots" /></button>
        </div>

        <div class="viewport">
          <div class="nr">
            <div class="nr-head">
              <svg width="24" height="10" viewBox="0 0 24 10"><path d="M5 5h3q3 0 5-3h3M8 5q4 0 6 3h3" fill="none" stroke="#999" /><rect y="3" width="7" height="4" rx="1" fill="#9c3a3c" /><rect x="13" y="1" width="7" height="4" rx="1" fill="#9c3a3c" /><rect x="16" y="6" width="7" height="4" rx="1" fill="#9c3a3c" /></svg>
              <span>Node-RED</span>
              <button class="deploy"><svg width="16" height="10" viewBox="0 0 16 10"><path d="M1 3.500h8" stroke="#222" stroke-width="2" /><path d="M10 0h5v3h-5z" fill="#777" /><path d="M9 6h6v3H9z" fill="#222" /></svg>Deploy<i class="caret" /></button>
              <button class="icon hbtn" aria-label="User"><svg width="10" height="10" viewBox="0 0 10 10"><circle cx="5" cy="3" r="2.500" fill="#ccc" /><path d="M1 9.500q0-4 4-4t4 4z" fill="#ccc" /></svg></button>
              <button class="icon hbtn last" aria-label="Main menu"><svg width="10" height="10" viewBox="0 0 10 10"><path d="M0 1.500h10M0 4.500h10M0 7.500h10" stroke="#ccc" stroke-width="1.500" /></svg></button>
            </div>
            <div class="nr-main">
              <aside class="palette">
                <div class="filter">
                  <svg width="6" height="6" viewBox="0 0 6 6"><circle cx="2.500" cy="2.500" r="1.800" fill="none" stroke="#888" /><path d="M4 4l2 2" stroke="#888" /></svg>
                  <input aria-label="Filter nodes" placeholder="filter nodes">
                </div>
                <div class="pal-body">
                  <div class="pal-list">
                    <section v-for="cat in palette" :key="cat.title" class="cat">
                      <h3><svg width="5" height="4" viewBox="0 0 5 4"><path d="M.5.5l2 2 2-2" fill="none" stroke="#777" /></svg>{{ cat.title }}</h3>
                      <div v-for="n in cat.nodes" :key="n.label" class="pnode" :class="{ flip: n.right }" :style="{ background: n.color }">
                        <i v-if="n.in" class="port in" /><i v-if="n.out" class="port out" />
                        <span class="ico"><svg width="10" height="12" viewBox="0 0 10 12" fill="#fff" v-html="glyph[n.icon]" /></span>
                        <span class="plabel">{{ n.label }}</span>
                      </div>
                    </section>
                  </div>
                  <div class="vbar"><i class="up" /><i class="thumb pal-thumb" /><i class="down" /></div>
                </div>
                <div class="foot end"><button class="fbtn w9">^</button><button class="fbtn w9">˅</button></div>
              </aside>

              <section class="workspace">
                <div class="tabs">
                  <button class="wtab">Temp. Control1</button>
                  <button class="icon tabact">✚</button>
                  <button class="icon tabact"><i class="caret grey" /></button>
                </div>
                <div class="ws-body">
                  <div class="canvas">
                    <svg class="wires">
                      <path v-for="(d, i) in offWires" :key="'o' + i" :d="d" class="wire off" />
                      <path v-for="(d, i) in wires" :key="i" :d="d" class="wire" />
                    </svg>
                    <div
                      v-for="(n, i) in nodes" :key="i" class="node" :class="[n.kind, { flip: n.right, off: n.off, plain: n.plain }]"
                      :style="{ left: n.x + 'px', top: n.y - 8 + 'px', width: n.w + 1 + 'px' }"
                    >
                      <button v-if="n.kind === 'inject'" class="trigger" aria-label="Inject" />
                      <i v-if="n.kind !== 'inject' && !n.noIn" class="port in" />
                      <i v-if="!n.noOut" class="port out" />
                      <span class="ico">
                        <span v-if="n.kind === 'text'" class="abc">abc</span>
                        <svg v-else width="10" height="12" viewBox="0 0 10 12" fill="#fff" v-html="glyph[kindIcon[n.kind]]" />
                      </span>
                      <span class="nlabel">{{ n.label }}</span>
                      <span v-if="n.status" class="status" :class="{ good: n.status === 'OK' }">{{ n.status }}</span>
                    </div>
                  </div>
                  <div class="vbar"><i class="up" /><i class="thumb ws-thumb" /><i class="down" /></div>
                </div>
                <div class="hbar"><i class="left" /><i class="hthumb" /><i class="right" /><i class="corner" /></div>
                <div class="foot ws-foot">
                  <button class="fbtn w9" aria-label="Search flows"><svg width="7" height="7" viewBox="0 0 7 7"><circle cx="3" cy="3" r="2" fill="none" stroke="#777" /><path d="M4.500 4.500L7 7" stroke="#777" /></svg></button>
                  <i class="grow" />
                  <button class="fbtn w10">▥</button><i class="sp" />
                  <button class="fbtn w9">−</button><button class="fbtn w9">○</button><button class="fbtn w9">+</button>
                </div>
              </section>

              <div class="splitter"><i /></div>

              <aside class="info">
                <div class="tabs">
                  <button class="wtab dash"><svg width="8" height="7" viewBox="0 0 8 7"><path d="M.5 0v6.500H8M2.500 6V4M4.500 6V2M6.500 6V1" fill="none" stroke="#777" /></svg>dashboard</button>
                  <button class="sq"><b>i</b></button>
                  <button class="sq" aria-label="Help"><svg width="7" height="7" viewBox="0 0 7 7"><path d="M2 0h5L5.500 6H0z" fill="#888" /><path d="M0 6.500h6" stroke="#888" /></svg></button>
                  <button class="sq" aria-label="Debug"><svg width="7" height="7" viewBox="0 0 7 7"><path d="M2 1h3v1.500h1.500V6H5v1H2V6H.5V2.500H2z" fill="#888" /></svg></button>
                  <button class="sq" aria-label="Configuration"><svg width="7" height="7" viewBox="0 0 7 7"><circle cx="3.500" cy="3.500" r="2.200" fill="none" stroke="#888" stroke-width="1.800" /></svg></button>
                  <button class="icon tabact"><i class="caret grey" /></button>
                </div>
                <div class="info-body">
                  <div class="info-content">
                    <div class="subtabs">
                      <button class="sub on">Layout</button><button class="sub">Site</button><button class="sub">Angular</button>
                      <a href="#" aria-label="Open dashboard"><svg width="8" height="8" viewBox="0 0 8 8"><path d="M4 1.500H.5v6h6V4.500M3 5l4-4M5 .5h2.500V3" fill="none" stroke="#777" /></svg></a>
                    </div>
                    <div class="linkrow">
                      <b>Tabs &amp; Links</b>
                      <button class="mini">^</button><button class="mini">˅</button><button class="mini wide">✚tab</button><button class="mini wide">✚link</button>
                    </div>
                    <ul class="tree">
                      <template v-for="t in uiTabs" :key="t.name">
                        <li class="head" :class="{ soft: t.soft }">
                          <svg width="5" height="4" viewBox="0 0 5 4"><path d="M.5.5l2 2 2-2" fill="none" stroke="#777" /></svg>
                          <svg width="9" height="8" viewBox="0 0 9 8"><path d="M1 1h7v6H1z" fill="none" stroke="#666" /><path d="M0 0h2.500v2H0zM6.500 0H9v2H6.500zM0 6h2.500v2H0zM6.500 6H9v2H6.500zM3 3h2v1.500H3zM4.500 4h2v1.500h-2z" fill="#666" /></svg>
                          {{ t.name }}
                        </li>
                        <li v-for="g in 4" :key="g">
                          <svg width="4" height="5" viewBox="0 0 4 5"><path d="M.5.5l2 2-2 2" fill="none" stroke="#777" /></svg>
                          <svg width="7" height="6" viewBox="0 0 7 6"><path d="M0 0h7v6H0z" fill="#666" /><path d="M0 2.500h7M0 4.500h7M2.300 2v4M4.700 2v4" stroke="#ccc" stroke-width=".5" /></svg>
                          Group {{ g }}
                        </li>
                      </template>
                    </ul>
                  </div>
                  <div class="vbar"><i class="up" /></div>
                </div>
                <div class="foot" />
              </aside>
            </div>
          </div>
          <nav class="edgebar">
            <button v-for="e in edgeApps" :key="e" class="icon eapp" :aria-label="e"><svg width="18" height="18" viewBox="0 0 24 24" v-html="app[e]" /></button>
            <button class="icon eapp eplus" aria-label="Add"><svg class="ln small" viewBox="0 0 16 16" v-html="line.plus" /></button>
            <i class="grow" /><i class="esep" />
            <button class="icon eapp" aria-label="Hide sidebar"><svg class="ln" viewBox="0 0 16 16" v-html="line.panel" /></button>
            <button class="icon eapp" aria-label="Settings"><svg class="ln" viewBox="0 0 16 16" v-html="line.cog" /></button>
          </nav>
        </div>

        <footer class="rbar">
          <button class="icon rstart" aria-label="Start"><svg width="24" height="24" viewBox="0 0 24 24" v-html="app.win10" /></button>
          <button class="icon rapp focus" aria-label="Edge"><svg width="24" height="24" viewBox="0 0 24 24" v-html="app.edge" /></button>
          <button v-for="a in remoteApps" :key="a.id" class="icon rapp" :class="{ open: a.open }" :aria-label="a.name">
            <svg width="24" height="24" viewBox="0 0 24 24" v-html="app[a.id]" /><b v-if="a.text" class="hs">{{ a.text }}</b>
          </button>
          <i class="grow" />
          <svg v-for="s in ['chevUp', 'cam', 'net', 'vol']" :key="s" class="ln rtray" viewBox="0 0 16 16" v-html="line[s]" />
          <div class="lang">ENG<br>INTL</div>
          <div class="rclock">14:31<br>12/11/2022</div>
          <button class="icon action" aria-label="Notifications">
            <svg width="16" height="16" viewBox="0 0 16 16"><path d="M0 0h16v12h-5v3l-3-3H0z" fill="#fff" /><path d="M2.500 3.500h11M2.500 6h11M2.500 8.500h8" stroke="#40384c" /></svg><span>2</span>
          </button>
          <i class="peek" />
        </footer>
        <div class="tip">12 November 2022<br>Saturday</div>
      </section>
    </main>

    <footer class="hostbar">
      <i />
      <div class="apps">
        <button v-for="a in hostApps" :key="a.id" class="icon happ" :class="{ open: a.open }" :aria-label="a.id">
          <svg width="24" height="24" viewBox="0 0 24 24" v-html="app[a.id]" /><span v-if="a.badge" class="badge">{{ a.badge }}</span>
        </button>
      </div>
      <div class="tray">
        <svg class="ln" viewBox="0 0 16 16" v-html="line.chevUp" />
        <svg viewBox="0 0 24 24" v-html="app.cloud" />
        <svg viewBox="0 0 24 24" v-html="app.cloud" />
        <svg class="ln mic" viewBox="0 0 16 16" v-html="line.mic" />
        <svg class="ln" viewBox="0 0 16 16" v-html="line.wifi" />
        <svg class="ln" viewBox="0 0 16 16" v-html="line.vol" />
        <div class="hclock">12:31 PM<br>11/12/2022</div>
        <span class="count">2</span>
      </div>
    </footer>
  </div>
</template>

<style>
body { margin: 0; }
</style>

<style scoped>
* { box-sizing: border-box; }
button { font: inherit; color: inherit; border: 0; padding: 0; background: none; }
input { font: inherit; border: 0; padding: 0; outline: 0; background: none; min-width: 0; }
svg { display: block; flex: none; overflow: visible; }
.host { min-height: 100vh; display: flex; flex-direction: column; font-family: "Open Sans", "Noto Sans CJK JP", sans-serif; color: #222; }
.ln { width: 16px; height: 16px; fill: none; stroke: currentColor; stroke-width: 1; }
.icon { display: flex; align-items: center; justify-content: center; flex: none; }
.grow { flex: 1; }

.titlebar { height: 37px; background: #e0e0e0; border-bottom: 1px solid #cfcfcf; display: flex; align-items: flex-start; }
.brand { width: 104px; height: 36px; margin-right: 3px; padding-left: 6px; display: flex; align-items: center; gap: 6px; font-size: 14px; font-weight: 600; color: #222; background: linear-gradient(#e9e9e9, #e9e9e9) 0 29px no-repeat; }
.session { width: 158px; height: 26px; margin-top: 5px; padding-left: 8px; background: #fff; border-radius: 2px; display: flex; align-items: center; gap: 6px; font-size: 12px; color: #444; }
.newtab { width: 32px; height: 38px; color: #666; }
.winctl { margin-left: auto; display: flex; color: #333; background: linear-gradient(#e9e9e9, #e9e9e9) 0 29px no-repeat; }
.winctl .icon { width: 44px; height: 36px; }

.addressbar { height: 43px; background: #fafafa; display: flex; align-items: center; }
.okdot { margin: 0 8px; }
.addressbox { flex: 1; height: 32px; background: #fff; box-shadow: 0 0 2px 1px #f2f2f2; padding: 0 1px 0 11px; display: flex; align-items: center; }
.rule { width: 1px; height: 16px; margin: 0 9px; background: #ccc; }
.address { flex: 1; font-size: 14px; color: #111; }
.tool { width: 32px; height: 32px; color: #111; position: relative; }
.tool .ln { height: 17px; }
.dim { color: #999; }
.toolgap { width: 8px; }
.tool.active::after { content: ""; position: absolute; left: 2px; right: 2px; bottom: 1px; height: 2px; background: #f0433a; }
.tool.active::before { content: ""; position: absolute; left: 15px; bottom: 4px; width: 3px; height: 3px; border-radius: 2px; background: #f0433a; }
.burger { width: 44px; color: #222; }

.stage { flex: 1; display: flex; align-items: center; justify-content: center; background: linear-gradient(#808080 0, #808080 89%, #666 100%); }
.remote { position: relative; width: 1024px; height: 768px; box-shadow: 0 0 0 1px #333; display: flex; flex-direction: column; background: #f6f9f2; overflow: hidden; }

.tabstrip { height: 32px; background: #cdd0c6; display: flex; align-items: center; font-size: 11px; color: #222; }
.tabmenu { width: 47px; color: #000; }
.tab { height: 100%; width: 238px; padding: 0 7px 0 11px; display: flex; align-items: center; gap: 10px; position: relative; }
.tab:not(.current)::before { content: ""; position: absolute; left: 0; top: 6px; width: 1px; height: 20px; background: #888; }
.tab span { flex: 1; white-space: nowrap; }
.tab.current { width: 242px; padding: 0 10px 0 12px; background: #f6f9f2; border-radius: 6px 6px 0 0; }
.addtab { width: 34px; color: #111; }
.addtab .ln { width: 14px; height: 14px; }
.edgectl { margin-left: auto; display: flex; color: #111; }
.edgectl .icon { width: 46px; height: 32px; }

.navbar { height: 39px; padding: 0 7px 0 5px; display: flex; align-items: center; border-bottom: 1px solid #bcbeb6; }
.nav { width: 44px; height: 36px; color: #222; }
.nav:first-child { margin-left: 1px; }
.faded { color: #cdd0c8; }
.omnibox { flex: 1; height: 31px; margin: 0 6px 0 6px; padding: 0 4px 0 18px; background: #fffff8; border-radius: 4px; display: flex; align-items: center; font-size: 13px; color: #666b62; }
.insecure { margin-left: 8px; width: 70px; white-space: nowrap; }
.rule.dark { background: #888; margin: 0 13px 0 9px; }
.url { flex: 1; color: transparent; background: linear-gradient(90deg, #111 92px, #777a80 92px); background-clip: text; -webkit-background-clip: text; }
.omni { width: 36px; }
.ext { width: 45px; color: #222; }

.viewport { flex: 1; display: flex; min-height: 0; }
.nr { flex: 1; display: flex; flex-direction: column; font-family: "Liberation Sans", "Noto Sans CJK JP", sans-serif; font-size: 7px; line-height: 9px; min-width: 0; }
.nr-head { height: 20px; background: #000; color: #c7c7c7; display: flex; align-items: center; padding: 0 8px 0 10px; font-size: 8px; }
.nr-head span { margin-left: 2px; flex: 1; }
.deploy { width: 66px; height: 15px; background: #44443c; color: #888; font-size: 7px; display: flex; align-items: center; justify-content: space-between; padding: 0 4px 0 5px; margin-right: 15px; }
.caret { border: 3px solid transparent; border-top-color: #ccc; border-bottom: 0; }
.caret.grey { border-top-color: #888; }
.hbtn { width: 14px; margin-right: 15px; }
.hbtn.last { margin-right: 0; }
.nr-main { flex: 1; display: flex; min-height: 0; }

.palette { width: 91px; border-right: 2px solid #bcbeb6; border-left: 1px solid #bcbeb6; display: flex; flex-direction: column; }
.filter { height: 19px; background: #fffff8; border-bottom: 1px solid #bcbeb6; display: flex; align-items: center; gap: 2px; padding: 1px 0 0 5px; }
.filter input { width: 70px; font-size: 7px; }
.filter input::placeholder { color: #999; opacity: 1; }
.pal-body, .ws-body, .info-body { flex: 1; min-height: 0; display: flex; }
.pal-list { flex: 1; overflow: hidden; background: #fffff8; }
.cat { padding-bottom: 4px; border-bottom: 1px solid #d0d2ca; }
.cat h3 { margin: 0 0 9px; height: 19px; padding: 0 0 2px 5px; display: flex; align-items: center; gap: 5px; font-size: 7px; background: #f6f9f2; color: #333; }
.pnode { position: relative; width: 62px; height: 16px; margin: 0 0 5px 5px; border: 1px solid #999b93; border-radius: 2px; display: flex; color: #555; }
.flip { flex-direction: row-reverse; }
.ico { width: 15px; flex: none; display: flex; align-items: center; justify-content: center; background: rgba(0, 0, 0, .05); border-right: 1px solid rgba(0, 0, 0, .1); }
.flip .ico { border-right: 0; border-left: 1px solid rgba(0, 0, 0, .1); }
.plabel { flex: 1; min-width: 0; padding-bottom: 1px; display: flex; align-items: center; justify-content: center; white-space: nowrap; }
.port { position: absolute; top: 4px; width: 6px; height: 6px; border: 1px solid #999b93; border-radius: 2px; background: #dde0d8; }
.port.in { left: -4px; }
.port.out { right: -3px; }

.vbar { position: relative; width: 17px; flex: none; background: #f6f9f2; display: flex; flex-direction: column; align-items: center; }
.up, .down { border: 4px solid transparent; }
.up { border-bottom-color: #9a9c95; border-top: 0; margin-top: 7px; }
.down { border-top-color: #444; border-bottom: 0; margin-top: auto; margin-bottom: 6px; }
.thumb { width: 13px; margin-top: 6px; background: #c5c8be; }
.pal-thumb { height: 189px; }
.ws-thumb { height: 130px; }
.foot { height: 14px; flex: none; background: #f6f9f2; border-top: 1px solid #bcbeb6; border-bottom: 1px solid #bcbeb6; display: flex; align-items: center; }
.foot.end { justify-content: flex-end; padding-right: 4px; }
.fbtn { height: 9px; border: 1px solid #c8cac2; font-size: 7px; line-height: 7px; color: #777; display: flex; align-items: center; justify-content: center; background: #fffff8; }
.w9 { width: 9px; }
.w10 { width: 10px; }

.workspace { flex: 1; min-width: 0; display: flex; flex-direction: column; border-right: 1px solid #bcbeb6; background: #fffff8; }
.tabs { height: 19px; flex: none; border-bottom: 1px solid #bcbeb6; display: flex; align-items: flex-end; background: #fffff8; }
.wtab { width: 100px; height: 16px; margin: 0 auto -1px 12px; padding: 0 0 2px 6px; text-align: left; font-weight: 700; color: #333; background: #fffff8; border: 1px solid #bcbeb6; border-bottom: 0; }
.tabact { width: 16px; height: 16px; color: #888; }
.canvas { position: relative; flex: 1; overflow: hidden; background-color: #fffff8; background-image: linear-gradient(90deg, #f3f4ee 1px, transparent 1px), linear-gradient(#f3f4ee 1px, transparent 1px); background-size: 10px 10px; background-position: 0 9px; }
.wires { position: absolute; width: 100%; height: 100%; }
.wire { fill: none; stroke: #9b9e96; stroke-width: 1.300; }
.wire.off { stroke: #c5c8c0; stroke-width: 1; stroke-dasharray: 4 3; }
.node { position: absolute; height: 16px; border: 1px solid rgba(120, 124, 116, .5); border-radius: 2px; display: flex; color: #222; font-style: italic; }
.node.plain { font-style: normal; color: #555; }
.node .nlabel { flex: 1; min-width: 0; display: flex; align-items: center; padding: 0 0 1px 4px; white-space: nowrap; }
.node.flip .nlabel { justify-content: flex-end; padding: 0 4px 1px 0; }
.mqtt { background: #dcc0d8; }
.fn { background: #f8d2a0; }
.delay { background: #e0e0fa; }
.db { background: #e87a00; }
.node.db { color: #8c4a12; }
.inject { background: #a3bfcd; }
.button, .form { background: #aee2e6; }
.text { background: #74c6cc; }
.node.off { background: #f6e6cc; border: 1px dashed #c5c8c0; color: #a58f95; }
.node.inject.off { background: #cde0e6; }
.trigger { position: absolute; left: -13px; top: 0; width: 12px; height: 14px; background: #a3bfcd; border: 2px solid #eef0e8; border-radius: 3px; box-shadow: 0 0 0 1px #b0b3aa; }
.off .trigger { background: #dff0f2; box-shadow: 0 0 0 1px #dde0d8; }
.abc { font-size: 6px; line-height: 6px; font-weight: 700; font-style: normal; color: #fff; border-bottom: 1px solid #fff; }
.status { position: absolute; left: 3px; top: 15px; height: 8px; display: flex; align-items: center; gap: 2px; font-size: 6px; line-height: 8px; font-style: normal; color: #888; }
.status::before { content: ""; width: 6px; height: 6px; border: 1px solid #e4cc30; border-radius: 1px; }
.status.good::before { background: #58a888; border-color: #58a888; }
.hbar { height: 17px; flex: none; background: #f6f9f2; display: flex; align-items: center; }
.left, .right { border: 4px solid transparent; }
.left { border-right-color: #9a9c95; border-left: 0; margin-left: 6px; }
.hthumb { width: 191px; height: 13px; margin-left: 7px; background: #c5c8be; }
.right { border-left-color: #444; border-right: 0; margin: 0 6px 0 auto; }
.corner { width: 17px; height: 17px; background: #dde0d8; }
.ws-foot { padding: 0 5px; }
.sp { width: 2px; }

.splitter { width: 4px; display: flex; align-items: center; justify-content: center; background: #f6f9f2; }
.splitter i { width: 2px; height: 25px; background: #c8cac2; }
.info { width: 158px; border-left: 1px solid #bcbeb6; border-right: 2px solid #bcbeb6; display: flex; flex-direction: column; background: #fffff8; }
.wtab.dash { width: 67px; margin: 0 4px -1px 1px; display: flex; align-items: center; gap: 1px; }
.sq { width: 14px; height: 14px; margin: 0 3px 2px 0; border: 1px solid #c8cac2; display: flex; align-items: center; justify-content: center; color: #888; font-family: "Liberation Serif", serif; }
.info-content { flex: 1; padding: 7px 5px 0; }
.subtabs { height: 16px; display: flex; gap: 3px; padding-left: 2px; border-bottom: 1px solid #bcbeb6; }
.sub { width: 35px; height: 15px; padding: 0 0 1px 6px; text-align: left; border: 1px solid #bcbeb6; border-bottom: 0; background: #f6f9f2; color: #777; }
.sub.on { height: 16px; background: #fffff8; color: #222; }
.subtabs a { margin: 2px 0 0 1px; }
.linkrow { height: 20px; display: flex; align-items: center; padding-top: 3px; color: #444; }
.linkrow b { flex: 1; }
.mini { width: 10px; height: 9px; border: 1px solid #c8cac2; font-size: 5px; line-height: 7px; color: #777; }
.mini.wide { width: 20px; }
.tree { list-style: none; margin: 0; padding: 0; border: 1px solid #c8cac2; border-radius: 2px; }
.tree li { height: 16px; padding: 0 0 1px 25px; display: flex; align-items: center; gap: 4px; border-bottom: 1px solid #d4d6ce; color: #666; }
.tree li:last-child { border-bottom: 0; }
.tree .head { height: 17px; padding-left: 15px; border-bottom: 0; background: #eef1e9; color: #444; font-weight: 700; }
.tree .soft { color: #b09fb8; font-weight: 400; }

.edgebar { width: 46px; padding: 1px 0 2px; display: flex; flex-direction: column; align-items: center; background: #f6f9f2; color: #222; }
.eapp { width: 42px; height: 42px; }
.eplus { margin-top: 3px; }
.ln.small { width: 12px; height: 12px; }
.esep { width: 28px; height: 1px; margin-bottom: 2px; background: #bcbeb6; }

.rbar { height: 40px; flex: none; display: flex; align-items: stretch; background: linear-gradient(90deg, #1e3236 0, #20363c 18%, #3d443c 27%, #46483e 50%, #46483e 100%); color: #fff; font-size: 11px; line-height: 18px; text-align: center; }
.rstart { width: 48px; margin-right: 3px; }
.rapp { width: 48px; margin-right: 1px; position: relative; }
.rapp.focus { background: #4a6065; border-bottom: 2px solid #76b9ed; padding-top: 2px; }
.rapp.open::after { content: ""; position: absolute; left: 4px; right: 4px; bottom: 0; height: 2px; background: #76b9ed; }
.hs { position: absolute; left: 0; right: 0; top: 11px; color: #111; }
.rtray { align-self: center; margin-left: 8px; }
.lang { width: 37px; margin-left: 5px; padding-top: 2px; }
.rclock { width: 70px; padding-top: 2px; background: linear-gradient(90deg, #5c6054 55%, #50605e); }
.action { width: 48px; padding-right: 5px; position: relative; background: linear-gradient(90deg, #40384c 60%, #2e3350); }
.action span { position: absolute; left: 20px; top: 19px; width: 16px; height: 16px; border: 1px solid #aaa; border-radius: 8px; background: #333440; line-height: 14px; font-weight: 600; }
.peek { width: 5px; border-left: 1px solid #888; background: #2e3350; }
.tip { position: absolute; right: 32px; bottom: 40px; width: 111px; height: 35px; padding: 1px 5px; background: #fffff8; border: 1px solid #666; font-size: 11px; line-height: 15px; color: #555a62; white-space: nowrap; }

.hostbar { height: 48px; flex: none; display: grid; grid-template-columns: 1fr auto 1fr; color: #fff; background: linear-gradient(90deg, #103a7a 0, #0f3c88 12%, #1148a0 22%, #2c5da0 29%, #37619e 30%, #10396f 35%, #123c7a 60%, #103875 100%); border-top: 1px solid #37527c; }
.apps { display: flex; padding-left: 2px; }
.happ { width: 44px; height: 46px; position: relative; }
.happ.open::after { content: ""; position: absolute; left: 19px; bottom: 4px; width: 6px; height: 3px; border-radius: 2px; background: #a3b3cf; }
.badge { position: absolute; left: 23px; top: 6px; width: 16px; height: 15px; border-radius: 8px; background: #e5484d; font-size: 9px; line-height: 14px; text-align: center; }
.tray { display: flex; align-items: center; justify-content: flex-end; padding: 0 20px 1px 0; }
.tray svg { width: 16px; height: 16px; margin: 0 4px; }
.tray .mic { margin: 0 12px 0 8px; }
.hclock { width: 68px; font-size: 11px; line-height: 16px; text-align: right; }
.count { width: 16px; height: 16px; margin-left: 12px; border-radius: 8px; background: #4cc2ff; color: #10263c; font-size: 10px; line-height: 16px; text-align: center; }
</style>
